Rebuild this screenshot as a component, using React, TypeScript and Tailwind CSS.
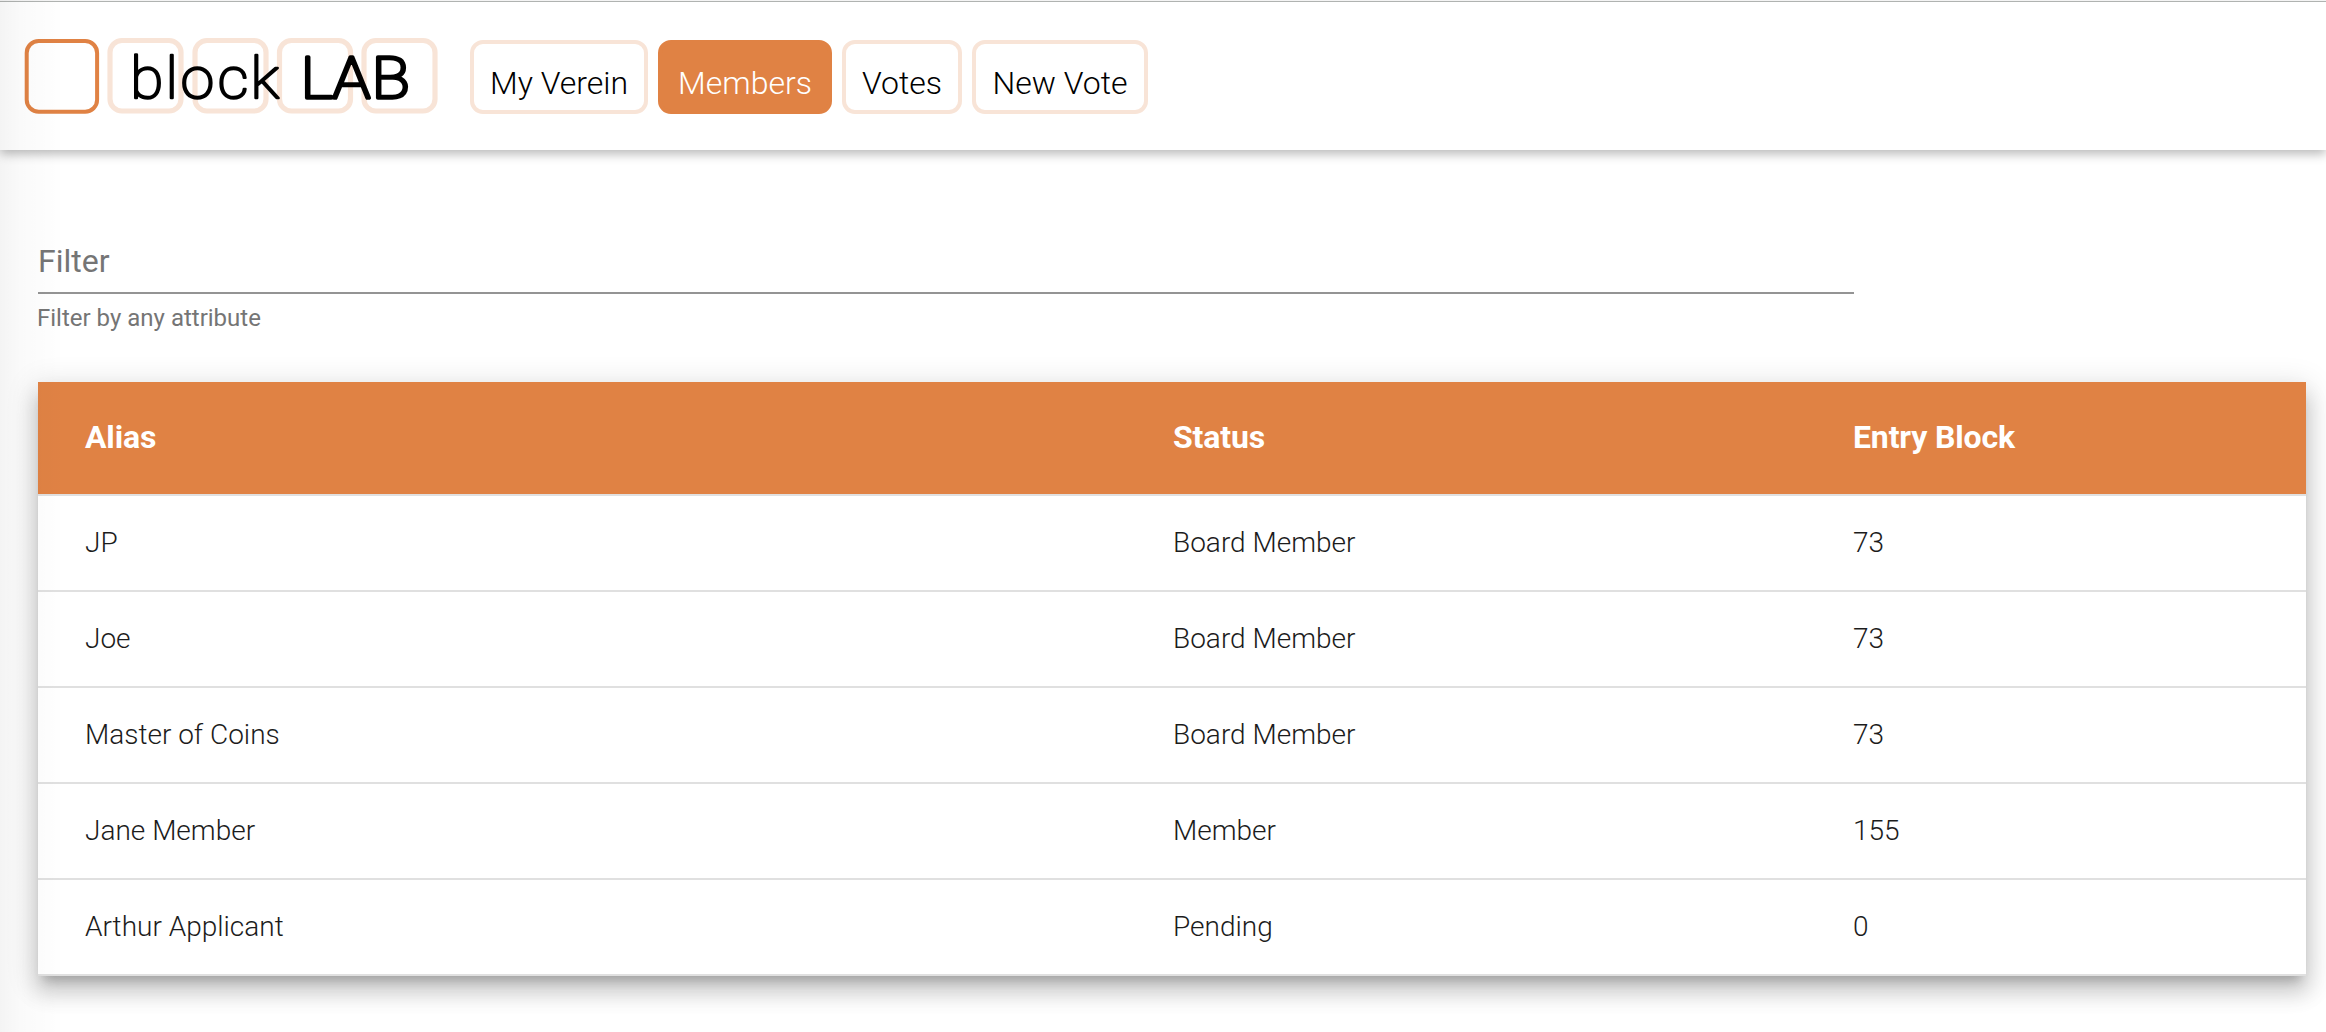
const navItems = [
  { label: "My Verein", width: "w-[178px]", active: false },
  { label: "Members", width: "w-[174px]", active: true },
  { label: "Votes", width: "w-[120px]", active: false },
  { label: "New Vote", width: "w-[176px]", active: false },
];

const members = [
  ["JP", "Board Member", "73"],
  ["Joe", "Board Member", "73"],
  ["Master of Coins", "Board Member", "73"],
  ["Jane Member", "Member", "155"],
  ["Arthur Applicant", "Pending", "0"],
];

function Logo() {
  return (
    <svg width="416" height="80" viewBox="0 0 416 80" className="block shrink-0" aria-label="block LAB">
      <rect x="2.7" y="4" width="70.4" height="70.8" rx="12" fill="none" stroke="#e08244" strokeWidth="4" />
      {[86, 171, 255.5, 340].map((x) => (
        <rect key={x} x={x} y="3.5" width="71" height="70.5" rx="12" fill="none" stroke="#f8e4d7" strokeWidth="5.2" />
      ))}
      <g
        fill="#000"
        stroke="#000"
        strokeLinejoin="round"
        fontFamily="Roboto, sans-serif"
        fontWeight="100"
        textAnchor="middle"
      >
        <text transform="scale(1.06 1)" x="115.9 139.3 163.6 197.2 227.2" y="61.3" fontSize="57" strokeWidth="2.4">
          block
        </text>
        <text transform="scale(1.08 1)" x="271.3 303.2 339.6" y="60.6" fontSize="58" strokeWidth="3.6">
          LAB
        </text>
      </g>
    </svg>
  );
}

export default function App() {
  return (
    <div className="relative h-[1032px] w-[2326px] overflow-hidden bg-white font-['Roboto',sans-serif]">
      <header className="flex h-[150px] items-start border-t border-[#f4f4f4] bg-white shadow-[0_4px_10px_0_rgba(0,0,0,0.28)]">
        <div className="w-full border-t border-[#b0b3b1]">
          <div className="flex items-start pt-[35px] pl-[24px]">
            <Logo />
            <nav className="ml-[30px] flex gap-[10px] pt-[3px]">
              {navItems.map((n) => (
                <a
                  key={n.label}
                  className={`${n.width} flex h-[74px] justify-center rounded-[13px] border-4 pt-[20px] text-[32px] leading-[38px] whitespace-nowrap ${
                    n.active
                      ? "border-[#e08244] bg-[#e08244] font-[350] text-white"
                      : "border-[#f8e4d7] font-light text-black"
                  }`}
                >
                  {n.label}
                </a>
              ))}
            </nav>
          </div>
        </div>
      </header>

      <main className="pl-[38px]">
        <div className="w-[1816px] pt-[90px]">
          <div className="h-[54px] border-b-2 border-[#949494] pt-[2px] text-[32px] leading-[38px] text-[#757575]">
            Filter
          </div>
          <div className="-ml-px pt-[10px] text-[24px] leading-[28px] text-[#757575]">Filter by any attribute</div>
        </div>

        <div className="mt-[50px] w-[2268px] bg-white shadow-[0_10px_10px_-6px_rgba(0,0,0,0.2),0_16px_20px_2px_rgba(0,0,0,0.14),0_6px_28px_4px_rgba(0,0,0,0.12)]">
          <div className="grid h-[114px] grid-cols-[1088px_680px_1fr] items-center border-b-2 border-[#e0e0e0] bg-[#e08244] bg-clip-padding pb-[2px] pl-[47px] text-[32px] leading-[38px] font-bold tracking-[-0.15px] text-white">
            <span>Alias</span>
            <span>Status</span>
            <span>Entry Block</span>
          </div>
          {members.map(([alias, status, block]) => (
            <div
              key={alias}
              className="grid h-[96px] grid-cols-[1088px_680px_1fr] items-center border-b-2 border-[#e0e0e0] pl-[47px] text-[28px] leading-[32px] font-light text-[#1c1c1c]"
            >
              <span>{alias}</span>
              <span>{status}</span>
              <span>{block}</span>
            </div>
          ))}
        </div>
      </main>

      <div className="pointer-events-none absolute inset-y-0 left-0 w-[60px] bg-[linear-gradient(to_right,rgba(0,0,0,0.045),rgba(0,0,0,0.018)_35%,rgba(0,0,0,0.004))]" />
    </div>
  );
}
